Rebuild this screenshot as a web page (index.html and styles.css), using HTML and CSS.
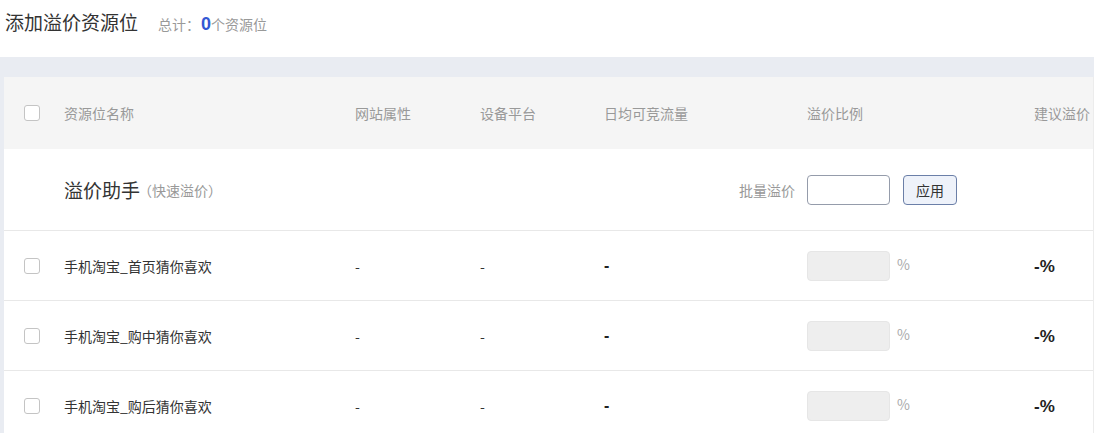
FILE: index.html
```html
<!DOCTYPE html>
<html lang="zh">
<head>
<meta charset="utf-8">
<link rel="stylesheet" href="styles.css">
</head>
<body>
<div class="page-head">
  <h1 class="title">添加溢价资源位</h1>
  <span class="total">总计：<b class="count">0</b>个资源位</span>
</div>
<div class="stage">
  <div class="card">
    <div class="grid thead">
      <div class="cell chk"><span class="checkbox"></span></div>
      <div class="cell">资源位名称</div>
      <div class="cell">网站属性</div>
      <div class="cell">设备平台</div>
      <div class="cell">日均可竞流量</div>
      <div class="cell">溢价比例</div>
      <div class="cell">建议溢价</div>
    </div>
    <div class="grid helper">
      <div class="cell chk"></div>
      <div class="cell span3"><span class="helper-title">溢价助手</span><span class="helper-sub">（快速溢价）</span></div>
      <div class="cell batch-label">批量溢价</div>
      <div class="cell"><input class="batch-input" type="text"><button class="apply">应用</button></div>
      <div class="cell"></div>
    </div>
    <div class="grid row">
      <div class="cell chk"><span class="checkbox"></span></div>
      <div class="cell">手机淘宝_首页猜你喜欢</div>
      <div class="cell">-</div>
      <div class="cell">-</div>
      <div class="cell strong">-</div>
      <div class="cell"><input class="ratio-input" type="text" disabled><span class="pct">%</span></div>
      <div class="cell strong pct-strong">-%</div>
    </div>
    <div class="grid row">
      <div class="cell chk"><span class="checkbox"></span></div>
      <div class="cell">手机淘宝_购中猜你喜欢</div>
      <div class="cell">-</div>
      <div class="cell">-</div>
      <div class="cell strong">-</div>
      <div class="cell"><input class="ratio-input" type="text" disabled><span class="pct">%</span></div>
      <div class="cell strong pct-strong">-%</div>
    </div>
    <div class="grid row">
      <div class="cell chk"><span class="checkbox"></span></div>
      <div class="cell">手机淘宝_购后猜你喜欢</div>
      <div class="cell">-</div>
      <div class="cell">-</div>
      <div class="cell strong">-</div>
      <div class="cell"><input class="ratio-input" type="text" disabled><span class="pct">%</span></div>
      <div class="cell strong pct-strong">-%</div>
    </div>
  </div>
</div>
</body>
</html>
```
FILE: styles.css
```css
* { box-sizing: border-box; }
html, body { margin: 0; padding: 0; background: #fff; overflow: hidden; }
body {
  font-family: "Noto Sans CJK SC", "Noto Sans", sans-serif;
  color: #333;
  font-size: 14px;
}
.page-head {
  height: 57px;
  display: flex;
  align-items: baseline;
  padding: 7px 0 0 5px;
}
.title {
  margin: 0;
  font-size: 19px;
  font-weight: 400;
  color: #333;
  line-height: 30px;
}
.total {
  margin-left: 20px;
  font-size: 14px;
  color: #999;
}
.count {
  font-family: "Liberation Sans", "Noto Sans", sans-serif;
  font-size: 18px;
  font-weight: 700;
  color: #3358d4;
  margin-left: 1px;
}
.stage {
  background: #e9ecf2;
  padding: 20px 0 0 4px;
  height: 376px;
}
.card {
  background: #fff;
  height: 100%;
  border-right: 1px solid #ececec;
}
.grid {
  display: grid;
  grid-template-columns: 60px 291px 125px 124px 203px 227px 1fr;
  align-items: center;
}
.cell { display: flex; align-items: center; white-space: nowrap; }
.chk { padding-left: 20px; }
.checkbox {
  width: 16px;
  height: 16px;
  border: 1px solid #c4c4c4;
  border-radius: 3px;
  background: #fff;
}
.thead {
  height: 72px;
  background: #f5f5f5;
  color: #999;
}
.helper {
  height: 81px;
}
.span3 { grid-column: span 3; }
.helper-title { font-size: 19px; color: #333; }
.helper-sub { font-size: 14px; color: #999; margin-left: -2px; }
.batch-label { justify-content: flex-end; padding-right: 12px; color: #999; }
.batch-input {
  width: 83px;
  height: 30px;
  border: 1px solid #959cab;
  border-radius: 4px;
  background: #fff;
  padding: 0;
}
.apply {
  margin-left: 13px;
  width: 54px;
  height: 30px;
  border: 1px solid #6b7fa8;
  border-radius: 4px;
  background: #eef2fa;
  color: #333;
  font-family: inherit;
  font-size: 14px;
  padding: 0;
}
.row {
  height: 70px;
  border-top: 1px solid #e8e8e8;
  color: #333;
}
.strong {
  font-family: "Liberation Sans", "Noto Sans", sans-serif;
  font-weight: 700;
  font-size: 16px;
  color: #222;
}
.pct-strong { font-size: 17px; padding-top: 2px; }
.ratio-input {
  width: 83px;
  height: 30px;
  border: 1px solid #e6e6e6;
  border-radius: 4px;
  background: #eeeeee;
  padding: 0;
}
.pct {
  margin-left: 7px;
  color: #aaa;
  font-size: 14px;
  position: relative;
  top: -2px;
}
```
